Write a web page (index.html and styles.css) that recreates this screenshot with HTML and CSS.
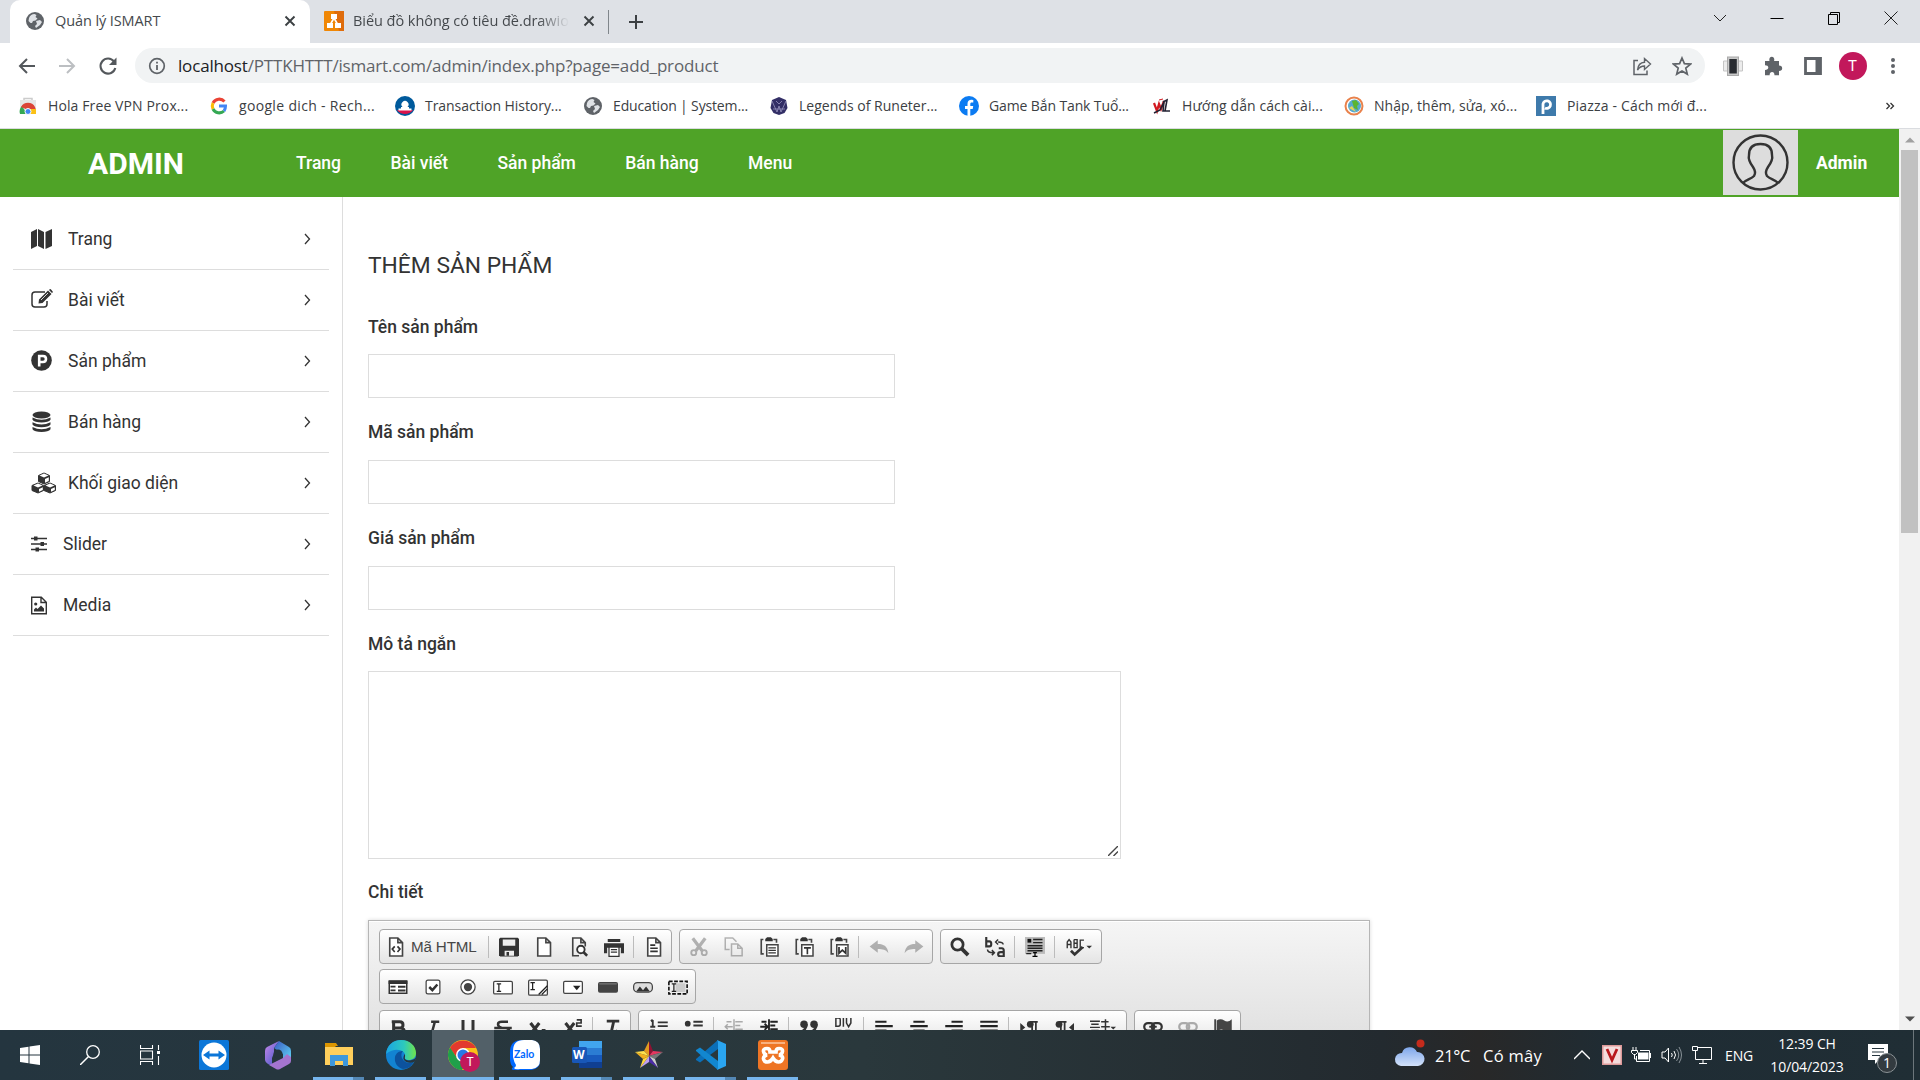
FILE: index.html
```html
<!DOCTYPE html>
<html lang="vi">
<head>
<meta charset="utf-8">
<title>Quản lý ISMART</title>
<link rel="stylesheet" href="styles.css">
</head>
<body>
<svg class="sprite" aria-hidden="true">
  <symbol id="globe" viewBox="0 0 18 18"><circle cx="9" cy="9" r="9" fill="#5f6368"/><path d="M3 6c1-2.500 3-4 5.500-4l2 1-1 2 2 1.500-2 2-2.500.5-1 2H4.500L2.500 9zM10 9l4-1 2 2-2 3-4 3-1-2 2-2z" fill="#dfe2e6"/></symbol>
  <symbol id="x" viewBox="0 0 12 12"><path d="M1.500 1.500l9 9M10.500 1.500l-9 9" stroke="#3c4043" stroke-width="1.900"/></symbol>
  <symbol id="chev" viewBox="0 0 8 14"><path d="M1.500 2l4.500 5-4.500 5" fill="none" stroke="#333" stroke-width="1.300"/></symbol>
  <symbol id="page" viewBox="0 0 16 16"><path d="M3 .8h6.500l3.700 3.700v10.700H3zM9.500 1v3.500H13" fill="#fff" stroke="#444" stroke-width="1.300"/></symbol>
  <symbol id="clip" viewBox="0 0 16 16"><path d="M3.500 2H1.800v11.500h2M11.500 2H14v2.500" fill="none" stroke="#444" stroke-width="1.300"/><path d="M5 3.300V1.500L6.500.2h3L11 1.500v1.800z" fill="#333"/><rect x="6.200" y="6.200" width="9" height="9" fill="#fff" stroke="#444" stroke-width="1.200"/></symbol>
</svg>

<header class="tabs">
  <div class="tab tab-on"><svg class="i18"><use href="#globe"/></svg><span class="tab-t t1">Quản lý ISMART</span><svg class="i12"><use href="#x"/></svg></div>
  <div class="tab tab-off"><svg class="i20" viewBox="0 0 20 20"><rect width="20" height="20" rx="1" fill="#f08705"/><path d="M10 0h10v20h-5z" fill="#df6c0c"/><path d="M10 7l-4 7M10 7l4 7" stroke="#fff" stroke-width="1.600"/><path d="M7 3h6v5H7zM3 12h6v5H3zM11 12h6v5h-6z" fill="#fff"/></svg><span class="tab-t t2">Biểu đồ không có tiêu đề.drawio</span><svg class="i12"><use href="#x"/></svg></div>
  <svg class="plus" viewBox="0 0 16 16"><path d="M8 1v14M1 8h14" stroke="#3c4043" stroke-width="2"/></svg>
  <div class="win">
    <svg viewBox="0 0 16 16"><path d="M2 5l6 6 6-6" fill="none" stroke="#222"/></svg>
    <svg viewBox="0 0 16 16"><path d="M1.500 8.500h13" stroke="#000"/></svg>
    <svg viewBox="0 0 16 16"><path d="M4.500 4.500v-2h9v10h-2M2.500 4.500h9v10h-9z" fill="none" stroke="#000"/></svg>
    <svg viewBox="0 0 16 16"><path d="M1.500 1.500l13 13M14.500 1.500l-13 13" stroke="#222"/></svg>
  </div>
</header>

<div class="bar">
  <svg class="i20 b1" viewBox="0 0 20 20"><path d="M18 10H3M10 3l-7 7 7 7" fill="none" stroke="#54585c" stroke-width="2"/></svg>
  <svg class="i20 b2" viewBox="0 0 20 20"><path d="M2 10h15M10 3l7 7-7 7" fill="none" stroke="#bcbfc2" stroke-width="2"/></svg>
  <svg class="i20 b3" viewBox="0 0 20 20"><path d="M16 5.500A7.500 7.500 0 1 0 17.300 12" fill="none" stroke="#54585c" stroke-width="2.100"/><path d="M18.500 1.500V9H11z" fill="#54585c"/></svg>
  <div class="pill">
    <svg class="i18" viewBox="0 0 18 18"><circle cx="9" cy="9" r="7.300" fill="none" stroke="#5f6368" stroke-width="1.700"/><path d="M9 8v5M9 4.800v1.800" stroke="#5f6368" stroke-width="1.800"/></svg>
    <span class="url"><b>localhost</b>/PTTKHTTT/ismart.com/admin/index.php?page=add_product</span>
    <svg class="i20" viewBox="0 0 20 20"><path d="M6 4.500H2v14h13v-4" fill="none" stroke="#5f6368" stroke-width="1.500"/><path d="M5.500 14c.5-5 3-7.500 7-7.700V2.500l6 5.500-6 5.500V10c-3 0-5 1-7 4z" fill="none" stroke="#5f6368" stroke-width="1.400"/></svg>
    <svg class="i20 star" viewBox="0 0 20 20"><path d="M10 2l2.400 5.600 6.100.5-4.700 4 1.500 6L10 14.900 4.700 18.100l1.500-6-4.700-4 6.100-.5z" fill="none" stroke="#5f6368" stroke-width="1.700"/></svg>
  </div>
  <div class="ext">
    <svg viewBox="0 0 20 20"><path d="M.5 5h5v10h-5zM14.500 5h5v10h-5z" fill="#ececec" stroke="#c5c5c5"/><rect x="4.500" y="1" width="11" height="18.500" fill="#c9c9c9" stroke="#aaa"/><rect x="6.300" y="3" width="7.500" height="14.500" fill="#292c31"/></svg>
    <svg viewBox="0 0 20 20"><path d="M2 5h4.500C5.800 2.500 7 .8 8.800.8s3 1.700 2.300 4.200H16v4.500c2 0 3.200 1 3.200 2.700S18 15 16 15v4.200h-4.500c0-2-1-3.200-2.400-3.200s-2.500 1.200-2.500 3.200H2V14c2 0 3.300-1 3.300-2.500S4 9.200 2 9.200z" fill="#5f6368"/></svg>
    <svg viewBox="0 0 20 20"><path d="M2.500 2.500h15v15h-15z" fill="#fff" stroke="#5f6368" stroke-width="2.800"/><path d="M12.500 2h5v16h-5z" fill="#5f6368"/></svg>
    <span class="ava">T</span>
    <svg viewBox="0 0 20 20" fill="#5f6368"><circle cx="10" cy="4" r="2"/><circle cx="10" cy="10" r="2"/><circle cx="10" cy="16" r="2"/></svg>
  </div>
</div>

<nav class="marks">
  <a><svg viewBox="0 0 20 20"><path d="M6 6V2.500h8V6" fill="none" stroke="#ccc" stroke-width="1.500"/><path d="M2 4h16v14H2z" fill="#e6e6e6"/><path d="M2 18a8 8 0 0 1 2-8l5 8z" fill="#34a853"/><path d="M3 11a8 8 0 0 1 14 0l1 3H10z" fill="#db4437"/><path d="M18 18V13h-7l-2 5z" fill="#fbc116"/><circle cx="10" cy="15.500" r="3" fill="#4285f4" stroke="#fff"/></svg><span>Hola Free VPN Prox...</span></a>
  <a><svg viewBox="0 0 20 20" fill="none" stroke-width="3"><path d="M15.500 5.500A7 7 0 0 0 4 7" stroke="#ea4335"/><path d="M4 7a7 7 0 0 0 0 6" stroke="#fbbc05"/><path d="M4 13a7 7 0 0 0 11 2" stroke="#34a853"/><path d="M10 10h6.500c0 2-.5 3.700-1.500 5" stroke="#4285f4"/></svg><span>google dich - Rech...</span></a>
  <a><svg viewBox="0 0 20 20"><circle cx="10" cy="10" r="10" fill="#005a9c"/><path d="M2 14h16a10 10 0 0 1-16 0z" fill="#d9134b"/><path d="M3.500 14.500v-2H6V11h1.500a3.500 3.500 0 1 1 5 0H14v1.500h2.500v2z" fill="#fff"/></svg><span>Transaction History...</span></a>
  <a><svg viewBox="-1 -1 20 20"><use href="#globe" width="18" height="18"/></svg><span>Education | System...</span></a>
  <a><svg viewBox="0 0 20 20"><path d="M10 1l7 3 1.500 8-3 5L10 19l-5.500-2-3-5L3 4z" fill="#332f66"/><path d="M3 5l5 11 2-6 2 6 5-11M7 5l3 3 3-3M4 13h12" fill="none" stroke="#9995bf" stroke-width=".8"/></svg><span>Legends of Runeter...</span></a>
  <a><svg viewBox="0 0 20 20"><circle cx="10" cy="10" r="10" fill="#0b7bf2"/><path d="M8.500 20v-7H6v-3h2.500V8c0-3 1.500-4.300 4-4.300l1.800.2v2.500h-1.500c-1.200 0-1.500.7-1.500 1.600v2h2.900l-.5 3h-2.400v7z" fill="#fff"/></svg><span>Game Bắn Tank Tuổ...</span></a>
  <a><svg viewBox="0 0 20 20" fill="none"><path d="M2 7l3 8 2-7 2 5 3-8" stroke="#d21920" stroke-width="2.200"/><path d="M7 4l4-1" stroke="#d21920"/><path d="M2 17l6-3 4-8-1 9h7M11 6l4-2-2 11" stroke="#223" stroke-width="1.600"/></svg><span>Hướng dẫn cách cài...</span></a>
  <a><svg viewBox="0 0 20 20" fill="none"><circle cx="10" cy="10" r="8.500" stroke="#e9824c" stroke-width="2"/><circle cx="10.500" cy="10" r="6.500" fill="#58a9cf"/><path d="M8 5l4-1 3 4-2 2 1 4-4-2z" fill="#5cb531"/><path d="M5 12l7 4-4-6z" fill="#e8d65a"/></svg><span>Nhập, thêm, sửa, xó...</span></a>
  <a><svg viewBox="0 0 20 20"><path d="M0 0h20v20H0z" fill="#3e7aab"/><path d="M7 18V8a3.800 3.800 0 1 1 2 4" fill="none" stroke="#fff" stroke-width="2.800"/></svg><span>Piazza - Cách mới đ...</span></a>
  <svg class="more" viewBox="0 0 10 10"><path d="M1.500 2L4.500 5l-3 3M5.500 2l3 3-3 3" fill="none" stroke="#333" stroke-width="1.300"/></svg>
</nav>

<main class="view">
  <div class="site">
    <div class="top">
      <strong class="brand">ADMIN</strong>
      <nav class="menu"><a>Trang</a><a>Bài viết</a><a>Sản phẩm</a><a>Bán hàng</a><a>Menu</a></nav>
      <svg class="face" viewBox="0 0 75 65"><path d="M0 0h75v65H0z" fill="#ddd"/><g fill="none" stroke="#333" stroke-width="2.400"><circle cx="37.500" cy="32.500" r="27"/><path d="M20 53c2-3 8-4 11-7 2-3 1-6-1-9-3-4-5-8-4-12 0-8 4-11 11.500-11S49 17 49 25c1 4-1 8-4 12-2 3-3 6-1 9 3 3 9 4 11 7"/></g></svg>
      <strong class="who">Admin</strong>
    </div>
    <div class="cols">
      <aside class="side">
        <a><svg class="s22" viewBox="0 0 22 22" fill="#333"><path d="M0 4l6-3v17l-6 3zM7 1l6 3v17l-6-3zM14.500 4l6.500-3v17l-6.500 3z"/></svg><span>Trang</span><svg class="chev"><use href="#chev"/></svg></a>
        <a><svg class="s22" viewBox="0 0 22 22"><path d="M14 3H4Q1 3 1 6v9q0 3 3 3h9q3 0 3-3v-3" fill="none" stroke="#333" stroke-width="1.500"/><path d="M7.500 14.500l.5-4 9-9 3.500 3.500-9 9zM18 1l1-1q1-.3 3 3l-1 1z" fill="#333"/><path d="M10 11l7-7" stroke="#fff" stroke-width=".8"/></svg><span>Bài viết</span><svg class="chev"><use href="#chev"/></svg></a>
        <a><svg class="s22" viewBox="0 0 22 22"><circle cx="10.500" cy="10.500" r="10.300" fill="#333"/><path d="M8.200 16.500V6H12q3 0 3 3t-3 3H8.500" fill="none" stroke="#fff" stroke-width="2.600"/></svg><span>Sản phẩm</span><svg class="chev"><use href="#chev"/></svg></a>
        <a><svg class="s22" viewBox="0 0 22 22" fill="#333"><ellipse cx="10.500" cy="4" rx="9" ry="3.500"/><path d="M1.500 6.500q9 4.500 18 0v2.300q-2 2.700-9 2.700t-9-2.700zM1.500 11.300q9 4.500 18 0v2.300q-2 2.700-9 2.700t-9-2.700zM1.500 16q9 4.500 18 0v2.300Q17.500 21 10.500 21t-9-2.700z"/></svg><span>Bán hàng</span><svg class="chev"><use href="#chev"/></svg></a>
        <a><svg class="s22 s26" viewBox="0 0 26 22"><g fill="#333" stroke="#333" stroke-linejoin="round"><path d="M13 1l5.500 2.500v6L13 12 7.500 9.500v-6zM7 11l5.500 2.500v5L7 21l-6-2.500v-5zM19 11l5.500 2.500v5L19 21l-6-2.500v-5z"/></g><path d="M13 1.500l4.500 2L13 5.500l-4.500-2zM7 11.600l4.500 2-4.500 2-4.500-2zM19 11.600l4.500 2-4.500 2-4.500-2zM14 7l3.800-1.700V9L14 10.800zM8 17l3.800-1.700V18L8 19.800zM20 17l3.800-1.700V18L20 19.800z" fill="#fff"/></svg><span>Khối giao diện</span><svg class="chev"><use href="#chev"/></svg></a>
        <a><svg class="s16" viewBox="0 0 16 16"><path d="M0 2.500h16M0 8h16M0 13.500h16" stroke="#333" stroke-width="1.500"/><path d="M3 .5h3.500v4H3zM9.500 6H13v4H9.500zM4.500 11.500H8v4H4.500z" fill="#333"/></svg><span>Slider</span><svg class="chev"><use href="#chev"/></svg></a>
        <a><svg class="s16 tall" viewBox="0 0 16 18"><path d="M.7.700h9.600l5 5v11.600H.7zM10 1v5h5" fill="none" stroke="#333" stroke-width="1.400"/><circle cx="4.700" cy="7.500" r="1.600" fill="#333"/><path d="M3 15v-2l2-2 1.500 1.500L10 9l3 3v3z" fill="#333"/></svg><span>Media</span><svg class="chev"><use href="#chev"/></svg></a>
      </aside>
      <section class="form">
        <h1>THÊM SẢN PHẨM</h1>
        <label>Tên sản phẩm</label><div class="in"></div>
        <label>Mã sản phẩm</label><div class="in"></div>
        <label>Giá sản phẩm</label><div class="in"></div>
        <label class="last">Mô tả ngắn</label>
        <div class="area"><svg viewBox="0 0 10 10"><path d="M0 10L10 0M5.500 10L10 5.500" stroke="#444" stroke-width="1.400"/></svg></div>
        <label>Chi tiết</label>
        <div class="ed">
          <div class="row r1">
            <div class="grp">
              <i class="src"><svg viewBox="0 0 16 16"><use href="#page"/><path d="M7 7.500L5 9.700 7 12M9.200 7.500l2 2.200-2 2.300" fill="none" stroke="#333" stroke-width="1.300"/></svg><span>Mã HTML</span></i><u></u>
              <i><svg viewBox="0 0 16 16"><path d="M0 1.500L1 .5h14l1 1v13l-1 1H1l-1-1z" fill="#333"/><path d="M3 2h10v5H3zM4.500 11h7.500v4H4.500z" fill="#eee"/><path d="M6 12h2v3H6z" fill="#333"/></svg></i>
              <i><svg><use href="#page"/></svg></i>
              <i><svg viewBox="0 0 16 16"><path d="M8 15H3V.8h6.500L13 4.500v3M9.500 1v3.500H13" fill="none" stroke="#444" stroke-width="1.300"/><circle cx="9.500" cy="10" r="3" fill="#fff" stroke="#333" stroke-width="1.500"/><path d="M11.500 12l3 3" stroke="#333" stroke-width="2"/></svg></i>
              <i><svg viewBox="0 0 16 16"><path d="M3 1.500h10V4H3zM0 5h16v8h-2.500V8.500h-11V13H0z" fill="#333"/><path d="M4 8h8v7.500H4z" fill="#fff" stroke="#333"/><path d="M5.500 10h5M5.500 12h5" stroke="#333"/></svg></i><u></u>
              <i><svg viewBox="0 0 16 16"><use href="#page"/><path d="M5 6.500h4M5 9h6M5 11.500h6" stroke="#333" stroke-width="1.300"/></svg></i>
            </div>
            <div class="grp p1">
              <i class="dim"><svg viewBox="0 0 16 16"><path d="M3 1l7.500 10M13 1L5.500 11" stroke="#444" stroke-width="2.600"/><circle cx="3.800" cy="12.500" r="2" fill="none" stroke="#444" stroke-width="1.500"/><circle cx="12.200" cy="12.500" r="2" fill="none" stroke="#444" stroke-width="1.500"/></svg></i>
              <i class="dim"><svg viewBox="0 0 16 16"><path d="M4.500 10H1V.8h6l3 3M6 5.500h5l3.500 3.500v6H6zM11 5.500V9h3.500" fill="none" stroke="#444" stroke-width="1.200"/></svg></i>
              <i><svg viewBox="0 0 16 16"><use href="#clip"/><path d="M7.500 8.700h6M7.500 10.700h6M7.500 12.700h6" stroke="#333"/></svg></i>
              <i><svg viewBox="0 0 16 16"><use href="#clip"/><path d="M8 8.700h5.500M10.700 8.700v5" stroke="#333" stroke-width="1.300"/></svg></i>
              <i><svg viewBox="0 0 16 16"><use href="#clip"/><path d="M8 8v5l2.700-2.500L13.400 13V8" fill="none" stroke="#333" stroke-width="1.400"/></svg></i><u></u>
              <i class="dim"><svg viewBox="0 0 16 16"><path d="M.5 7.500L7 2.500v3c5 0 8 2 8.500 7.500-2-3-4.500-3.500-8.500-3.500v3z" fill="#444"/></svg></i>
              <i class="dim"><svg viewBox="0 0 16 16"><path d="M15.500 7.500L9 2.500v3C4 5.500 1 7.500.5 13c2-3 4.500-3.500 8.500-3.500v3z" fill="#444"/></svg></i>
            </div>
            <div class="grp p1">
              <i><svg viewBox="0 0 16 16"><circle cx="6" cy="6" r="4.500" fill="none" stroke="#333" stroke-width="2.200"/><path d="M9.500 9.500l5 5" stroke="#333" stroke-width="3"/></svg></i>
              <i><svg viewBox="0 0 16 16"><path d="M1 0v7.500h2.500Q5 7.500 5 5.500T3.500 3.500H1M11 9h2.500Q15 9 15 11v4.500h-2.500q-2 0-2-1.700t2-1.700H15" fill="none" stroke="#333" stroke-width="1.700"/><path d="M14.500 6q0-2-4-2M10.500 2L8.500 4l2 2M2 10q0 2.500 4.500 2.500M5.500 10.500l2 2-2 2" fill="none" stroke="#333" stroke-width="1.200"/></svg></i><u></u>
              <i><svg viewBox="0 0 16 16"><path d="M0 0h16v13.500H0z" fill="#bbb"/><path d="M2 1.500h3v3H2z" fill="#111"/><path d="M6.500 2H14M6.500 4.500H14M2 7h12M2 9h12M2 11h12M1 13.300h4" stroke="#222" stroke-width="1.100"/><path d="M6.500 12.500h3M8 12v4M6 15.500h4" stroke="#000"/></svg></i><u></u>
              <i class="wide"><svg class="w2" viewBox="0 0 21 16"><g fill="none" stroke="#333"><path d="M1 9V4l1.500-2L4 4v5M1 6h3M6.500 2v6.500H9V5H6.500H9V2H6.500M14.500 2.500h-3v6h3" stroke-width="1.100"/><path d="M4 11l3 3 6.500-6" stroke-width="2.200"/></g><path d="M16.500 7h4.500l-2.200 2.300z" fill="#333"/></svg></i>
            </div>
          </div>
          <div class="row">
            <div class="grp">
              <i><svg viewBox="0 0 16 16"><path d="M1 3.500h14v9.500H1z" fill="#fff" stroke="#333" stroke-width="1.200"/><path d="M.5 2.500h15v3H.5zM2 7h4v1.300H2zM2 10h4v1.300H2zM8 7h6v1.500H8zM8 10h6v1.500H8z" fill="#333"/></svg></i>
              <i><svg viewBox="0 0 16 16"><rect x="2.500" y="2.500" width="11" height="11" rx="1.500" fill="#fff" stroke="#444"/><path d="M5 8l2.500 2.500L11.500 6" fill="none" stroke="#333" stroke-width="2"/></svg></i>
              <i><svg viewBox="0 0 16 16"><circle cx="8" cy="8" r="5.700" fill="#fff" stroke="#444"/><circle cx="8" cy="8" r="3.300" fill="#444"/></svg></i>
              <i><svg viewBox="0 0 16 16"><rect x=".5" y="3.500" width="15" height="10" rx="1" fill="#fff" stroke="#444"/><path d="M3 5.500h3.500M3 11.500h3.500M4.700 5.500v6" stroke="#222"/></svg></i>
              <i><svg viewBox="0 0 16 16"><rect x=".5" y="2.500" width="15" height="12" rx="1" fill="#fff" stroke="#444"/><path d="M2 4.500h3.500M2 10h3.500M3.700 4.500V10M8.500 14L15.500 7M11 14l4.500-4.500" stroke="#222"/></svg></i>
              <i><svg viewBox="0 0 16 16"><rect x=".5" y="3.500" width="15" height="9.500" rx="1" fill="#fff" stroke="#444"/><path d="M8 7h6l-3 3.500z" fill="#222"/></svg></i>
              <i><svg viewBox="0 0 16 16"><rect y="4" width="16" height="8.500" rx="1.500" fill="#444"/><path d="M1 5.500h14" stroke="#777"/></svg></i>
              <i><svg viewBox="0 0 16 16"><rect x=".5" y="4.500" width="15" height="7.500" rx="3" fill="#ddd" stroke="#444"/><path d="M2.500 11.500l3-4 2.500 3 2.500-3 3 4z" fill="#333"/></svg></i>
              <i><svg viewBox="0 0 16 16"><path d="M6 5h8v7H6z" fill="#ccc"/><path d="M.7 3.500h14.600v10H.7z" fill="none" stroke="#111" stroke-width="1.300" stroke-dasharray="3 1.200"/><path d="M3 5.500h3.500M3 11.500h3.500M4.700 5.500v6" stroke="#222"/></svg></i>
            </div>
          </div>
          <div class="row">
            <div class="grp">
              <i><svg viewBox="0 0 16 16"><path d="M4.500 2v12M3 3h6.500q2.500 0 2.500 2.500T9.500 8h-5H10q3 0 3 3t-3 3H3" fill="none" stroke="#333" stroke-width="2.400"/></svg></i>
              <i><svg viewBox="0 0 16 16"><path d="M6.500 3H13M9.500 3l-3 11M3 14h7" stroke="#333" stroke-width="2"/></svg></i>
              <i><svg viewBox="0 0 16 16"><path d="M4 1.500V9q0 3 4 3t4-3V1.500M3 15h10" fill="none" stroke="#333" stroke-width="2.400"/></svg></i>
              <i><svg viewBox="0 0 16 16"><path d="M12 3H7Q4 3 4 5t3 3h3q3 0 3 3t-3 3H4M1 8h14" fill="none" stroke="#333" stroke-width="2"/></svg></i>
              <i><svg viewBox="0 0 16 16"><path d="M2 4l7 9M9 4l-7 9M11 10h3" stroke="#333" stroke-width="2.500"/></svg></i>
              <i><svg viewBox="0 0 16 16"><path d="M2 4l7 9M9 4l-7 9" stroke="#333" stroke-width="2.500"/><path d="M11 1.500h3.500V4H11v2.500h4" fill="none" stroke="#333" stroke-width="1.300"/></svg></i><u></u>
              <i><svg viewBox="0 0 16 16"><path d="M3 2.500h10M8.500 3L6 14M10 10l4 4" stroke="#333" stroke-width="2.300"/></svg></i>
            </div>
            <div class="grp p2">
              <i><svg viewBox="0 0 16 16"><path d="M3 1.500v5.500M1.500 2.500L3 1.500M1 7h4M1 10h3v2H1v2h3M7 3.500h8M7 6.500h8M7 12h8" fill="none" stroke="#333" stroke-width="1.500"/></svg></i>
              <i><svg viewBox="0 0 16 16"><circle cx="3" cy="4.500" r="2.300" fill="#333"/><circle cx="3" cy="11.500" r="2" fill="#333"/><path d="M7.500 3h7.500M7.500 6h7.500M7.500 12h7.500" stroke="#333" stroke-width="1.500"/></svg></i><u></u>
              <i class="dim"><svg viewBox="0 0 16 16"><path d="M8 1v14M9 3h6M9 6h4M9 9h6M2 3h4M1 7h6M3 5L1 7l2 2" fill="none" stroke="#333" stroke-width="1.200"/></svg></i>
              <i><svg viewBox="0 0 16 16"><path d="M8 1v14M9 3h6M9 6h4M9 9h6M2 3h4M1 7h6M4.500 4.500L7 7 4.500 9.500" fill="none" stroke="#222" stroke-width="1.500"/></svg></i><u></u>
              <i><svg viewBox="0 0 16 16"><circle cx="4" cy="5" r="3" fill="#333"/><circle cx="12" cy="5" r="3" fill="#333"/><path d="M6 5q0 4-4 6M14 5q0 4-4 6" fill="none" stroke="#333" stroke-width="2"/></svg></i>
              <i><svg viewBox="0 0 16 16"><path d="M1.500 0v6.500h2q1.500 0 1.500-1.500V1.500Q5 0 3.500 0zM7.500 0v7M10 0v4l1.700 3L13.500 4V0M2 10h4M9 10h4" fill="none" stroke="#333" stroke-width="1.200"/></svg></i><u></u>
              <i><svg viewBox="0 0 16 16"><path d="M1 3h9M1 6.500h14M1 10h9M1 13.500h14" stroke="#222" stroke-width="1.700"/></svg></i>
              <i><svg viewBox="0 0 16 16"><path d="M3.500 3h9M1 6.500h14M3.500 10h9M1 13.500h14" stroke="#222" stroke-width="1.700"/></svg></i>
              <i><svg viewBox="0 0 16 16"><path d="M6 3h9M1 6.500h14M6 10h9M1 13.500h14" stroke="#222" stroke-width="1.700"/></svg></i>
              <i><svg viewBox="0 0 16 16"><path d="M1 3h14M1 6.500h14M1 10h14M1 13.500h14" stroke="#222" stroke-width="1.700"/></svg></i><u></u>
              <i><svg viewBox="0 0 16 16"><path d="M1 4l4 3.500L1 11z" fill="#333"/><circle cx="9" cy="5" r="2.700" fill="#333"/><path d="M9 3h6M10.500 3v11M13.500 3v11" stroke="#333" stroke-width="1.400"/></svg></i>
              <i><svg viewBox="0 0 16 16"><path d="M16 4l-4 3.500 4 3.500z" fill="#333"/><circle cx="4" cy="5" r="2.700" fill="#333"/><path d="M4 3h6M5.500 3v11M8.500 3v11" stroke="#333" stroke-width="1.400"/></svg></i>
              <i class="wide"><svg class="w2" viewBox="0 0 21 16"><path d="M0 2.500h8M1 5h6M0 7.500h8M1 10h6M9 3h6M9 7h7M12.500 1v12" stroke="#333" stroke-width="1.200"/><path d="M16.500 7h4.500l-2.200 2.300z" fill="#333"/></svg></i>
            </div>
            <div class="grp">
              <i><svg viewBox="0 0 16 16"><rect x="1" y="4" width="8" height="6" rx="3" fill="none" stroke="#333" stroke-width="1.800"/><rect x="7" y="4" width="8" height="6" rx="3" fill="none" stroke="#333" stroke-width="1.800"/><path d="M5 7h6" stroke="#333" stroke-width="1.500"/></svg></i>
              <i class="dim"><svg viewBox="0 0 16 16"><rect x="1" y="4" width="8" height="6" rx="3" fill="none" stroke="#333" stroke-width="1.800"/><rect x="7" y="4" width="8" height="6" rx="3" fill="none" stroke="#333" stroke-width="1.800"/></svg></i>
              <i><svg viewBox="0 0 16 16"><path d="M1 1h1.500v14H1zM3 2q3-2 6 0t6-1v9q-3 2-6 0t-6 1z" fill="#444"/></svg></i>
            </div>
          </div>
        </div>
      </section>
    </div>
  </div>
  <div class="scroll"><svg viewBox="0 0 10 6"><path d="M0 5.500h10L5 .5z" fill="#a0a0a0"/></svg><div class="thumb"></div><svg class="dn" viewBox="0 0 10 6"><path d="M0 .5h10L5 5.500z" fill="#505050"/></svg></div>
</main>

<footer class="task">
  <div class="app"><svg class="a20" viewBox="0 0 20 20" fill="#fff"><path d="M0 3l8.500-1.200v7.700H0zM9.500 1.600L20 0v9.500H9.500zM0 10.500h8.500v7.700L0 17zM9.500 10.500H20V20L9.500 18.400z"/></svg></div>
  <div class="app"><svg class="a20" viewBox="0 0 20 20"><circle cx="13" cy="7" r="6.300" fill="none" stroke="#fff" stroke-width="1.300"/><path d="M8.500 11.500L0 20" stroke="#fff" stroke-width="1.500"/></svg></div>
  <div class="app"><svg class="a20" viewBox="0 0 20 20"><path d="M.5 0v3.500h12V0M.5 6h12v8H.5zM.5 20v-3.500h12V20M18.500 0v5M18.500 11v9" fill="none" stroke="#fff" stroke-width="1.100"/><path d="M17 6h3v3h-3z" fill="#fff"/></svg></div>
  <div class="app"><svg viewBox="0 0 30 30"><rect width="30" height="30" rx="1.500" fill="#0b76d8"/><circle cx="15" cy="15" r="12.500" fill="#fff"/><path d="M4 15l6.500-4.500v3h9v-3L26 15l-6.500 4.500v-3h-9v3z" fill="#0b76d8"/></svg></div>
  <div class="app"><svg viewBox="0 0 30 30"><defs><linearGradient id="m1" x1="0" y1="0" x2="1" y2="1"><stop stop-color="#c987e8"/><stop offset="1" stop-color="#3c55c8"/></linearGradient><linearGradient id="m2" x1="0" y1="0" x2="1" y2="1"><stop stop-color="#3b58c0"/><stop offset="1" stop-color="#60d8f8"/></linearGradient></defs><path d="M16 1L4 7q-2 1-2 4v9q0 2 3 4l4 2v-8l2-5V8z" fill="url(#m1)"/><path d="M16 1l10 6q2 1 2 4v8l-8 2v-7l-9-6z" fill="url(#m2)"/><path d="M28 17v4q0 2-2 3l-9 5q-2 1-4 0l-7-4 14-7 4-4z" fill="#a474cf"/><circle cx="15" cy="14" r="4.500" fill="#25353e"/></svg></div>
  <div class="app run two"><svg viewBox="0 0 30 30"><path d="M1 3h11l2 3h-2l-2 2H1z" fill="#dc9500"/><path d="M1 7h28v18H1z" fill="#ffcf5c"/><path d="M6 26V15h18v11h-5v-5h-8v5z" fill="#3e98dc"/></svg></div>
  <div class="app run"><svg viewBox="0 0 30 30"><defs><linearGradient id="e1"><stop stop-color="#1aa4e4"/><stop offset=".6" stop-color="#2dc9bd"/><stop offset="1" stop-color="#70e34a"/></linearGradient></defs><circle cx="15" cy="15" r="15" fill="#1283d2"/><path d="M0 14C1 5 7 0 15 0c9 0 15 6 15 13 0 5-4 7-7 7s-5-1-4-3c2-6-9-11-19-3z" fill="url(#e1)"/><path d="M9 17c1-4 4-6 8-6-3 3-2 10 5 12 3 0 5-1 6-2-2 5-6 8-11 8-5-1-9-6-8-12z" fill="#0c529e"/><path d="M19 17c-1 2 1 3.500 4 3.500s5-1 7.500-3.500l-2 5c-5 2-10 0-11-3-.5-2 1-5 1.500-5z" fill="#26353e"/></svg></div>
  <div class="app run on"><svg class="chr" viewBox="0 0 30 30"><circle cx="15" cy="15" r="15" fill="#fbc116"/><path d="M2 8A15 15 0 0 1 28 8H15L9 18z" fill="#e23a2e"/><path d="M2 7.500A15 15 0 0 0 14 30l7-12H9z" fill="#1fa04a"/><circle cx="15" cy="15" r="7" fill="#fff"/><circle cx="15" cy="15" r="5.500" fill="#2879e6"/></svg><span class="dot">T</span></div>
  <div class="app run"><svg viewBox="0 0 30 30"><path d="M12 0h9q9 1 9 9v12q0 8-9 9H4q-4 0-1-3-3-3-3-8v-7Q0 0 12 0z" fill="#0068ff"/><path d="M14 0h8q8 1 8 9v11q0 8-8 9H10q-5 1-6-1 2-1 2-3-2-3-3-8V11Q3 0 14 0z" fill="#fff"/></svg><span class="zalo">Zalo</span></div>
  <div class="app run two"><svg viewBox="0 0 30 30"><path d="M7 1h23v7H7z" fill="#41a5ee"/><path d="M7 8h23v7H7z" fill="#2b7cd3"/><path d="M7 15h23v7H7z" fill="#185abd"/><path d="M7 22h23v6H7z" fill="#103f91"/><rect y="7" width="15" height="16" rx="1.500" fill="#1857b8"/></svg><span class="wd">W</span></div>
  <div class="app run"><svg viewBox="0 0 30 30"><path d="M15 1v15l-5-5z" fill="#e39c20"/><path d="M15 1l4 10-4 5z" fill="#8e1233"/><path d="M19 11l10 1-14 4z" fill="#e63760"/><path d="M29 12l-8 7-6-3z" fill="#777"/><path d="M21 19l3 9-9-12z" fill="#ccc"/><path d="M24 28l-9-6v-6z" fill="#4c2ca8"/><path d="M15 22l-9 6 9-12z" fill="#bfa0ee"/><path d="M6 28l3-9 6-3z" fill="#ffd83d"/><path d="M9 19l-8-7 14 4z" fill="#f0b020"/><path d="M1 12l9-1 5 5z" fill="#ffe24d"/></svg></div>
  <div class="app run two"><svg viewBox="0 0 30 30"><path d="M22 0v9L4 22.500 0 20v-1z" fill="#0b6fb8"/><path d="M22 30v-9L4 7.500 0 10v1z" fill="#1287d0"/><path d="M21 0l9 4v22l-9 4q1-1 1-3V3q0-2-1-3z" fill="#2aa5f0"/></svg></div>
  <div class="app run"><svg viewBox="0 0 30 30"><rect width="30" height="30" rx="3" fill="#ee7525"/><path d="M3 3h24" stroke="#f8b180" stroke-width="2"/><path d="M9 8.500q-4 0-3.500 3T9 15q-4 1-3.500 4t4 3q3 0 5.500-4 2.500 4 5.500 4t4-3-3.500-4q3-.5 3.500-3.500T21 8.500q-3 0-3 3.500h-6q0-3.500-3-3.500z" fill="none" stroke="#fff" stroke-width="3.600"/></svg></div>
  <div class="tray">
    <svg class="cloud" viewBox="0 0 32 28"><defs><linearGradient id="c1" x1="0" y1="0" x2="0" y2="1"><stop stop-color="#7ea6ea"/><stop offset="1" stop-color="#d3e2fa"/></linearGradient></defs><path d="M7 27a6.500 6.500 0 1 1 1-13 8 8 0 0 1 15-1 7 7 0 1 1 1 14z" fill="url(#c1)"/><circle cx="26.500" cy="4.500" r="4" fill="#c42b1c"/></svg>
    <span class="tt temp">21°C</span><span class="tt sky">Có mây</span>
    <svg class="t1a" viewBox="0 0 16 10"><path d="M0 9l8-8 8 8" fill="none" stroke="#fff" stroke-width="1.400"/></svg>
    <svg class="t2a" viewBox="0 0 20 20"><path d="M0 0h20v20H0z" fill="#d99"/><path d="M1.500 1.500h17v17h-17z" fill="#f4dcdc"/><path d="M5 4l5 11 5-11" fill="none" stroke="#b8181c" stroke-width="2.800"/></svg>
    <svg class="t3a" viewBox="0 0 20 16"><path d="M7 5.500h10.500v7H7z" fill="#fff"/><path d="M5.500 9v5.500h13v-11H9M19.500 6v5M2 0v3M5 0v3M.5 3.500h6v2l-2 2h-2l-2-2zM3.500 8v4h2" fill="none" stroke="#fff"/></svg>
    <svg class="t4a" viewBox="0 0 20 18"><path d="M.5 6h3L7 2v14l-3.500-4h-3zM10 7q1.500 2 0 4M12.500 5q3 4 0 8" fill="none" stroke="#fff"/><path d="M15 3q4.500 6 0 12M17.500 1q5 8 0 16" fill="none" stroke="#899298"/></svg>
    <svg class="t5a" viewBox="0 0 20 18"><path d="M6 1.500h13.500v12H3.500V5M11 14v3M7 17.500h8M.5.500h5v4h-5z" fill="none" stroke="#fff"/></svg>
    <span class="tt eng">ENG</span>
    <div class="clock"><span class="tt">12:39 CH</span><span class="tt date">10/04/2023</span></div>
    <div class="note"><svg viewBox="0 0 20 20"><path d="M0 0h20v16h-9l-4 4v-4H0z" fill="#fff"/><path d="M4 4.500h12M4 8h12M4 11.500h8" stroke="#25343d" stroke-width="1.200"/></svg><span class="cnt">1</span></div>
    <div class="peek"></div>
  </div>
</footer>
</body>
</html>
```
FILE: styles.css
```css
*{box-sizing:border-box}
body{margin:0;width:1920px;height:1080px;overflow:hidden;background:#fff;font-family:"Open Sans","Noto Sans",sans-serif;display:flex;flex-direction:column}
svg{display:block;flex:none}
.sprite{width:0;height:0;position:absolute}
.i20{width:20px;height:20px}.i18{width:18px;height:18px}.i12{width:12px;height:12px}

.tabs{height:43px;background:#dee1e6;display:flex;align-items:center;padding-left:10px;flex:none}
.tab{display:flex;align-items:center;height:43px}
.tab-on{width:300px;background:#fff;border-radius:10px 10px 0 0;padding:0 14px 2px 16px}
.tab-off{width:299px;padding:0 14px 2px;position:relative}
.tab-off::after{content:"";position:absolute;right:0;top:10px;height:24px;width:1px;background:#80868b}
.tab-t{font-size:14.5px;color:#45494d;white-space:nowrap;overflow:hidden;flex:1}
.t1{margin-left:11px;letter-spacing:-.1px}
.t2{margin:0 14px 0 9px;letter-spacing:-.05px;-webkit-mask-image:linear-gradient(90deg,#000 86%,transparent)}
.plus{width:16px;height:16px;margin-left:19px}
.win{margin-left:auto;display:flex;gap:41px;padding:0 21px 7px 0}
.win svg{width:16px;height:16px}

.bar{height:45px;display:flex;align-items:center;padding-left:17px;flex:none}
.b2{margin-left:20px}.b3{margin-left:21px}
.pill{width:1570px;height:35px;margin-left:17px;border-radius:18px;background:#f1f3f4;display:flex;align-items:center;padding:0 13px}
.url{font-size:17px;color:#5f6368;margin-left:12px;flex:1;letter-spacing:-.17px;white-space:nowrap}
.url b{font-weight:400;color:#202124}
.star{margin-left:20px}
.ext{display:flex;align-items:center;gap:20px;margin-left:17.5px}
.ext svg{width:20px;height:20px}
.ava{width:28px;height:28px;margin:0 -4px;border-radius:50%;background:#c2185b;color:#fff;font:15px/28px Roboto,sans-serif;text-align:center}

.marks{height:41px;border-bottom:1px solid #dadce0;display:flex;align-items:center;padding:0 0 5px 18px;flex:none}
.marks a{display:flex;align-items:center;gap:10px;width:191px;font-size:14px;letter-spacing:-.12px;color:#3c4043;white-space:nowrap}
.marks a svg{width:20px;height:20px}
.marks a:nth-child(1){letter-spacing:.11px}
.marks a:nth-child(2){width:186px;letter-spacing:.33px}
.marks a:nth-child(3){width:188px;letter-spacing:-.05px}
.marks a:nth-child(4){width:186px;letter-spacing:-.15px}
.marks a:nth-child(5){width:190px;letter-spacing:.02px}
.marks a:nth-child(6){width:193px}
.marks a:nth-child(7){width:192px;letter-spacing:.09px}
.marks a:nth-child(8){width:192px;letter-spacing:.05px}
.marks a:nth-child(9){gap:11px;letter-spacing:.17px}
.more{width:10px;height:10px;margin-left:158px}

.view{height:901px;display:flex;overflow:hidden;font-family:Roboto,sans-serif;color:#333;flex:none}
.site{width:1899px;display:flex;flex-direction:column}
.top{height:68px;background:#4fa327;display:flex;align-items:center;color:#fff;flex:none}
.brand{font-size:30px;width:183px;margin-left:88px}
.menu{display:flex;gap:49.4px;padding-left:25px;font-size:17.5px;font-weight:500}
.face{width:75px;height:65px;margin:0 18px 1px auto}
.who{font-size:17.5px;width:83px}
.cols{display:flex;height:833px}
.side{width:343px;border-right:1px solid #ddd;padding:12px 13px 0;font-size:17.5px}
.side a{height:61px;border-bottom:1px solid #ddd;display:flex;align-items:center;padding:0 17px 0 18px}
.side span{flex:1;margin-left:16px}
.side .s22+span{margin-left:15px}
.s22{width:22px;height:22px}.s26{width:26px}.side .s26+span{margin-left:11px}
.s16{width:16px;height:16px}.tall{height:19px}
.chev{width:9px;height:14px}

.form{padding:53px 0 0 25px;width:1027px}
h1{margin:0 0 31px;font-size:22.8px;line-height:32px;font-weight:400}
label{display:block;font-size:17.5px;font-weight:500;line-height:26px;height:26px;margin-bottom:15px}
h1+label{padding-top:1px}
.last{margin-bottom:14px}
.in{width:527px;height:44px;border:1px solid #ddd;margin-bottom:21px}
.area{width:753px;height:188px;border:1px solid #ddd;margin-bottom:20px;display:flex;align-items:flex-end;justify-content:flex-end;padding:2px}
.area svg{width:10px;height:10px}
.ed{width:1002px;height:400px;border:1px solid #b6b6b6;background:linear-gradient(#f5f5f5,#e2e2e2 110px,#d4d4d4 200px);box-shadow:0 0 4px rgba(0,0,0,.15),inset 0 1px #fff;padding:8px 10px}
.row{display:flex;gap:7px;margin-bottom:6px}
.r1{margin-bottom:5px}
.grp{height:35px;border:1px solid #a6a6a6;border-radius:4px;background:linear-gradient(#fff,#e4e4e4);display:flex;align-items:center}
.p1{padding:0 1px}.p2{padding:0 2px}
.grp i{width:35px;display:flex;justify-content:center;font-style:normal}
.grp i svg{width:20px;height:20px}
.grp .wide{width:43px}.grp i .w2{width:26px}
.grp .src{width:106px;justify-content:flex-start;padding-left:6px;gap:5px}
.src span{font:15.2px/20px "Liberation Sans",sans-serif;letter-spacing:-.15px;color:#474747;white-space:nowrap}
.grp u{width:1px;height:22px;background:#bcbcbc;margin:0 2px}
.dim{opacity:.38}

.scroll{width:21px;background:#f1f1f1;display:flex;flex-direction:column;align-items:center;padding:8px 0}
.scroll svg{width:10px;height:6px}
.thumb{width:17px;height:383px;background:#c1c1c1;margin-top:7px}
.scroll .dn{margin-top:auto}

.task{height:50px;background:linear-gradient(90deg,#24353f,#2a383c 45%,#232a2f 72%,#282828 77%,#1f2c34 84%,#202e35);display:flex;flex:none}
.app{width:62px;display:flex;align-items:center;justify-content:center;position:relative}
.app svg{width:30px;height:30px}
.app .a20{width:20px;height:20px}
.app:nth-child(-n+3){width:60px}
.app:nth-child(4){width:67px}
.app:nth-child(5){width:61px}
.run::after{content:"";position:absolute;left:5px;right:6px;bottom:0;height:3px;background:#76b5ed}
.two::after{background:linear-gradient(90deg,#76b5ed 40px,#5488b5 40px)}
.on{background:#526068}
.on::after{left:0;right:0}
.dot,.zalo,.wd{position:absolute;color:#fff;text-align:center}
.dot{width:20px;height:20px;left:28px;top:22px;border-radius:50%;background:#c2185b;font:12px/20px Roboto,sans-serif}
.zalo{color:#0068ff;font:bold 10.5px/16px Lato,sans-serif;left:20px;top:16px}
.wd{font:bold 12px/16px "Open Sans",sans-serif;left:17px;top:17px}
.tray{margin-left:auto;width:526px;display:flex;align-items:center;color:#fff}
.tt{font-size:14px;line-height:19px;white-space:nowrap}
.cloud{width:32px;height:28px;margin-top:-5px}
.temp,.sky{font-size:16.5px}
.temp{margin-left:9px;width:48px;letter-spacing:-.3px}
.sky{width:91px;letter-spacing:.3px}
.t1a{width:16px;height:10px}
.t2a{width:20px;height:20px;margin-left:12px}
.t3a{width:20px;height:16px;margin-left:9px}
.t4a{width:21px;height:18px;margin-left:10px}
.t5a{width:20px;height:18px;margin-left:10px}
.eng{margin-left:13px;width:45px;letter-spacing:-.1px}
.clock{width:74px;display:flex;flex-direction:column;align-items:center;gap:4px;letter-spacing:-.1px}
.note{position:relative;margin:0 0 2px 24px}
.note svg{width:20px;height:20px}
.cnt{position:absolute;left:9px;top:9px;width:20px;height:20px;border-radius:50%;background:#333b40;border:1px solid #8a9195;font-size:14px;line-height:18px;text-align:center}
.peek{width:1px;height:50px;background:#6c767b;margin-left:25px}
```
